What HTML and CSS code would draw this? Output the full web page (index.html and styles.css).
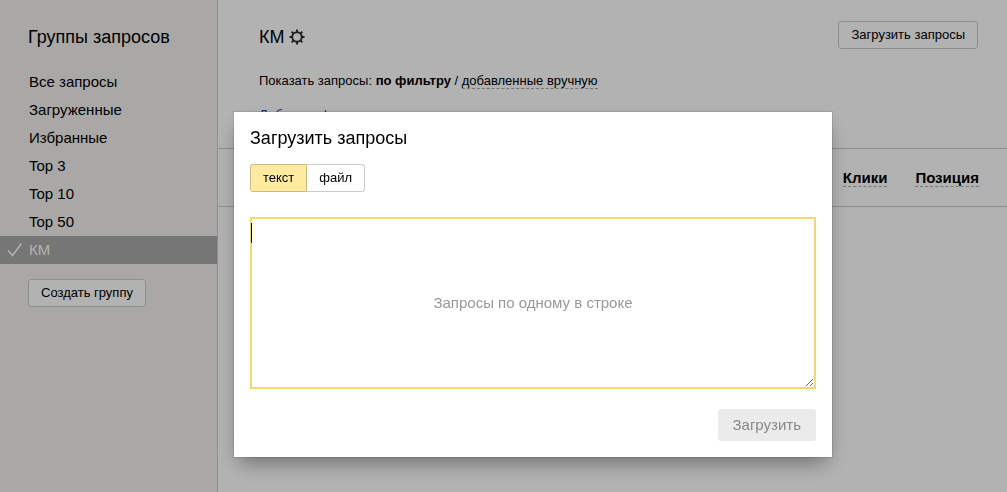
FILE: index.html
```html
<!DOCTYPE html>
<html lang="ru">
<head>
<meta charset="utf-8">
<meta name="viewport" content="width=device-width, initial-scale=1">
<title>Группы запросов</title>
<link rel="stylesheet" href="styles.css">
</head>
<body>
<div class="page">
  <aside class="sidebar">
    <h2 class="heading sidebar-heading">Группы запросов</h2>
    <nav class="groups">
      <a class="group" href="#all">Все запросы</a>
      <a class="group" href="#loaded">Загруженные</a>
      <a class="group" href="#favorites">Избранные</a>
      <a class="group" href="#top3">Top 3</a>
      <a class="group" href="#top10">Top 10</a>
      <a class="group" href="#top50">Top 50</a>
      <a class="group group-current" href="#km" aria-current="page"><svg class="check" viewBox="0 0 16 16" aria-hidden="true"><path d="M1 8.500l4.500 5L14.500 1.500"/></svg>КМ</a>
    </nav>
    <button class="button" type="button">Создать группу</button>
  </aside>
  <main class="content">
    <header class="content-head">
      <h1 class="heading content-title">КМ
        <svg class="gear" viewBox="0 0 16 16" role="img" aria-label="Настройки"><circle cx="8" cy="8" r="4.800"/><path d="M8 .5v3M8 12.500v3M.5 8h3M12.500 8h3M2.600 2.600l2 2M11.400 11.400l2 2M2.600 13.400l2-2M11.400 4.600l2-2"/></svg>
      </h1>
      <button class="button" type="button">Загрузить запросы</button>
    </header>
    <p class="switch">Показать запросы: <b>по фильтру</b> / <a class="dashed" href="#manual">добавленные вручную</a></p>
    <a class="add-filter" href="#filter">Добавить фильтр</a>
    <table class="stats">
      <thead>
        <tr><th></th><th class="stat"><a class="dashed" href="#clicks">Клики</a></th><th class="stat"><a class="dashed" href="#position">Позиция</a></th></tr>
      </thead>
    </table>
  </main>
</div>
<div class="overlay">
  <form class="dialog" role="dialog" aria-labelledby="dialog-title">
    <h2 class="heading" id="dialog-title">Загрузить запросы</h2>
    <div class="tabs">
      <button class="button tab tab-active" type="button" aria-pressed="true">текст</button>
      <button class="button tab tab-last" type="button" aria-pressed="false">файл</button>
    </div>
    <div class="field">
      <textarea class="queries" aria-label="Запросы" placeholder="Запросы по одному в строке"></textarea>
      <span class="caret"></span>
    </div>
    <button class="submit" type="submit" disabled>Загрузить</button>
  </form>
</div>
</body>
</html>
```
FILE: styles.css
```css
* {
  box-sizing: border-box;
}

body {
  margin: 0;
  font: 13px/20px "Liberation Sans", Arial, sans-serif;
  color: #000;
  background: #fff;
}

a {
  color: inherit;
  text-decoration: none;
}

.page {
  display: flex;
  min-height: 100vh;
}

.heading {
  margin: 0;
  font-size: 18px;
  line-height: 24px;
  font-weight: normal;
}

.sidebar {
  flex: 0 0 218px;
  padding-top: 25px;
  border-right: 1px solid #ccc;
  background: #f2f1ee;
}

.sidebar-heading {
  padding-left: 28px;
}

.groups {
  display: flex;
  flex-direction: column;
  margin: 19px 0 15px;
  font-size: 15px;
  line-height: 28px;
}

.group {
  display: block;
  padding-left: 29px;
}

.group-current {
  display: flex;
  align-items: center;
  gap: 6px;
  padding-left: 7px;
  color: #fff;
  background: #a9a9a9;
}

.check {
  width: 16px;
  height: 16px;
  fill: none;
  stroke: #fff;
  stroke-width: 1.500;
}

.button {
  height: 28px;
  padding: 0 12px;
  border: 1px solid #ccc;
  border-radius: 3px;
  font: inherit;
  color: #000;
  background: #fff;
}

.sidebar > .button {
  margin-left: 28px;
}

.content {
  flex: 1;
  min-width: 0;
}

.content-head {
  display: flex;
  justify-content: space-between;
  align-items: flex-start;
  padding: 21px 29px 0 41px;
}

.content-title {
  display: flex;
  align-items: center;
  gap: 5px;
  padding-top: 4px;
}

.gear {
  width: 16px;
  height: 16px;
  fill: none;
  stroke: #333;
  stroke-width: 2;
}

.switch {
  margin: 22px 0 0 41px;
}

.dashed {
  border-bottom: 1px dashed #aaa;
}

.add-filter {
  display: block;
  margin: 14px 0 0 41px;
  color: #04b;
}

.stats {
  width: 100%;
  margin-top: 23px;
  border-collapse: collapse;
  border: solid #ccc;
  border-width: 1px 0;
  font-size: 15px;
}

.stats th {
  height: 58px;
  padding: 0 28px 0 0;
}

.stats .stat {
  width: 1px;
  white-space: nowrap;
}

.overlay {
  position: fixed;
  inset: 0;
  padding: 112px 175px 0 234px;
  background: rgba(0, 0, 0, 0.3);
}

.dialog {
  display: flex;
  flex-direction: column;
  padding: 14px 16px 16px;
  background: #fff;
  box-shadow: 0 0 0 1px rgba(0, 0, 0, 0.1), 0 10px 20px -5px rgba(0, 0, 0, 0.4);
}

.tabs {
  display: flex;
  margin: 14px 0 25px;
}

.tab-active {
  border-color: #ccba7a;
  border-radius: 3px 0 0 3px;
  background: #ffeba0;
}

.tab-last {
  border-left: 0;
  border-radius: 0 3px 3px 0;
}

.field {
  position: relative;
  display: flex;
}

.queries {
  width: 100%;
  height: 172px;
  padding: 0;
  border: 2px solid #f5da69;
  outline: 0;
  font: inherit;
  font-size: 15px;
  resize: both;
}

.queries::placeholder {
  line-height: 168px;
  text-align: center;
  color: #999;
}

.caret {
  position: absolute;
  top: 6px;
  left: 1px;
  width: 1px;
  height: 20px;
  background: #000;
}

.submit {
  align-self: flex-end;
  height: 32px;
  margin-top: 20px;
  padding: 0 15px;
  border: 0;
  border-radius: 3px;
  font: inherit;
  font-size: 15px;
  color: #888;
  background: #ebebeb;
}
```
